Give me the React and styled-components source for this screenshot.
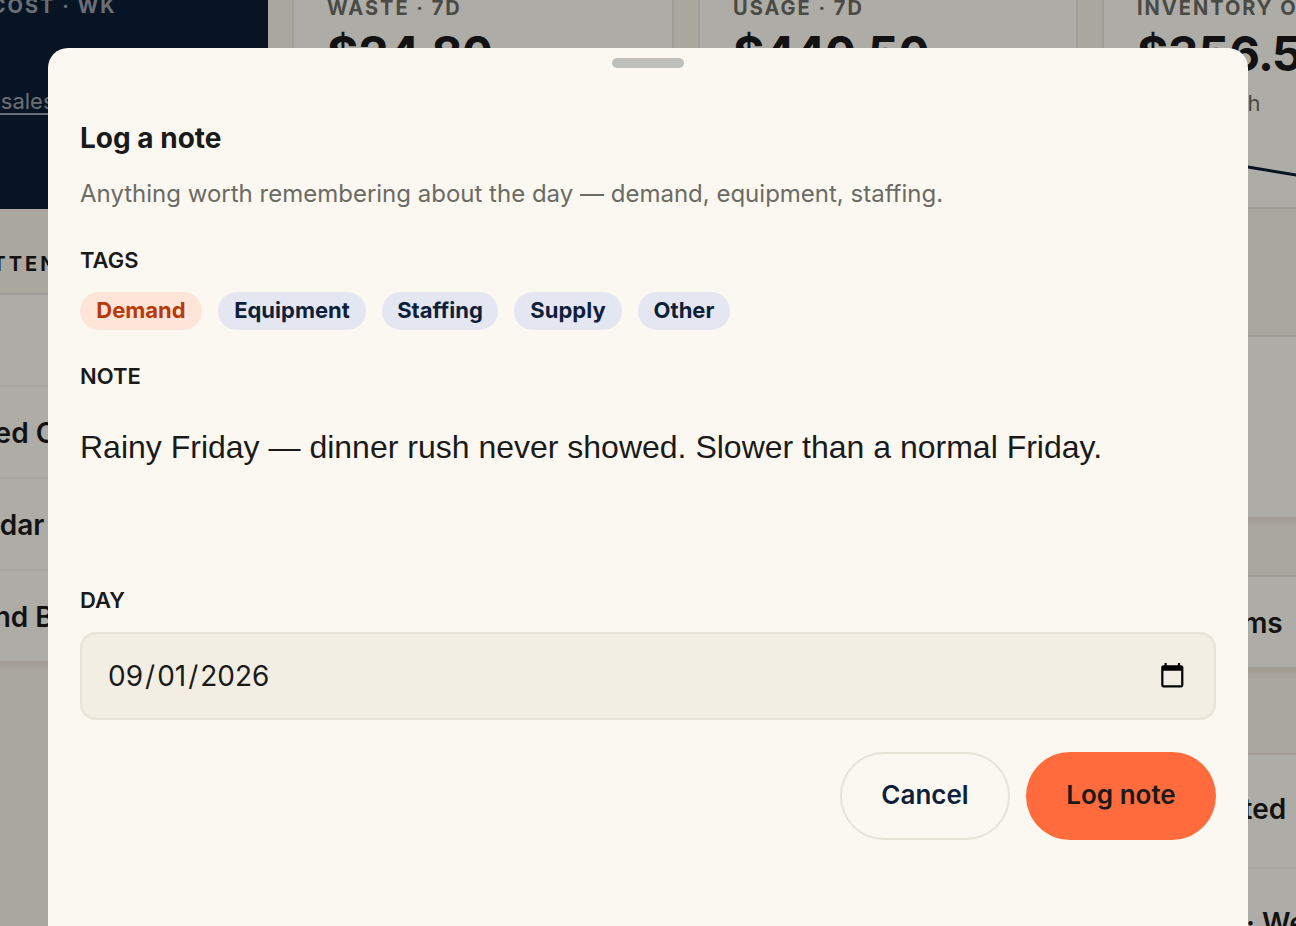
import { useState } from "react"
import styled, { createGlobalStyle, css } from "styled-components"

const tags = ["Demand", "Equipment", "Staffing", "Supply", "Other"]
const lowStock = ["", "Minced Chicken", "Cheddar", "Ground Beef"]
const activity = ["Get started", "Receipt · Wednesday"]

export default function App() {
    const [tag, setTag] = useState("Demand")
    const [note, setNote] = useState("Rainy Friday — dinner rush never showed. Slower than a normal Friday.")

    return (
        <Page>
            <GlobalStyle />
            <Dashboard>
                <Stats>
                    <StatCard $dark>
                        <StatLabel>FOOD COST · WK</StatLabel>
                        <StatValue />
                        <StatLink>30% of sales</StatLink>
                    </StatCard>
                    <StatCard>
                        <StatLabel>WASTE · 7D</StatLabel>
                        <StatValue>$24.80</StatValue>
                    </StatCard>
                    <StatCard>
                        <StatLabel>USAGE · 7D</StatLabel>
                        <StatValue>$440.50</StatValue>
                    </StatCard>
                    <StatCard>
                        <StatLabel>INVENTORY ON HAND</StatLabel>
                        <StatValue>$356.50</StatValue>
                        <StatHint>as of March</StatHint>
                        <Trend viewBox="0 0 312 40">
                            <path d="M0 4 L94 16 L208 35" />
                        </Trend>
                    </StatCard>
                </Stats>
                <Columns>
                    <div>
                        <SectionTitle>NEEDS ATTENTION</SectionTitle>
                        <List>
                            {lowStock.map((name, index) => (
                                <ListRow key={index}>{name}</ListRow>
                            ))}
                        </List>
                    </div>
                    <SideColumn>
                        <List>
                            <EmptyRow />
                        </List>
                        <List>
                            <ListRow $side>Prep items</ListRow>
                        </List>
                        <Feed>
                            {activity.map((item) => (
                                <FeedRow key={item}>{item}</FeedRow>
                            ))}
                        </Feed>
                    </SideColumn>
                </Columns>
            </Dashboard>
            <Overlay>
                <Sheet role="dialog">
                    <Handle />
                    <Title>Log a note</Title>
                    <Subtitle>Anything worth remembering about the day — demand, equipment, staffing.</Subtitle>
                    <Label>TAGS</Label>
                    <Chips>
                        {tags.map((name) => (
                            <Chip key={name} $active={name === tag} onClick={() => setTag(name)}>{name}</Chip>
                        ))}
                    </Chips>
                    <Label>NOTE</Label>
                    <NoteInput value={note} onChange={(e) => setNote(e.target.value)} spellCheck={false} />
                    <Label>DAY</Label>
                    <DateField>
                        <DateText>
                            <span>09</span>/<span>01</span>/<span>2026</span>
                        </DateText>
                        <CalendarIcon viewBox="0 0 24 24">
                            <path d="M20 3h-1V1h-2v2H7V1H5v2H4c-1.1 0-2 .9-2 2v16c0 1.1.9 2 2 2h16c1.1 0 2-.9 2-2V5c0-1.1-.9-2-2-2zm0 18H4V8h16v13z" />
                        </CalendarIcon>
                    </DateField>
                    <Actions>
                        <Button>Cancel</Button>
                        <Button $primary>Log note</Button>
                    </Actions>
                </Sheet>
            </Overlay>
        </Page>
    )
}

const GlobalStyle = createGlobalStyle`
    * {
        box-sizing: border-box;
    }

    body {
        margin: 0;
        overflow: hidden;
        font-family: Inter, sans-serif;
        font-variation-settings: 'opsz' 14;
        color: #1a1a1a;
    }
`

const Page = styled.div`
    width: 1296px;
    height: 926px;
    overflow: hidden;
    background-color: #f4efe4;
`

const Dashboard = styled.main`
    width: 1598px;
    margin-left: -114px;
    margin-top: -38px;
`

const Stats = styled.div`
    display: grid;
    grid-template-columns: 382px 382px 380px 382px;
    grid-template-rows: 247px;
    gap: 24px;
`

const StatCard = styled.div`
    display: flex;
    flex-direction: column;
    align-items: flex-start;
    padding: 32px 32px 0;
    background-color: #f9f7f0;
    border: 2px solid #e7e2d6;

    ${({ $dark }) => $dark && css`
        background-color: #0b1d34;
        border: none;
    `}
`

const StatLabel = styled.div`
    padding-left: 1px;
    font-size: 20px;
    line-height: 24px;
    font-weight: 700;
    letter-spacing: 2px;
    white-space: nowrap;
    color: #6b6b63;

    ${StatCard}:first-child & {
        color: #9aa0a8;
    }
`

const StatValue = styled.div`
    height: 56px;
    margin-top: 6px;
    padding-left: 1px;
    font-size: 48px;
    line-height: 56px;
    font-weight: 700;
    font-variant-numeric: tabular-nums;
    letter-spacing: -0.48px;
`

const StatHint = styled.div`
    margin-top: 8px;
    padding-left: 1px;
    font-size: 22px;
    line-height: 26px;
    color: #6b6b63;
`

const StatLink = styled(StatHint)`
    margin-top: 10px;
    padding-left: 0;
    line-height: 23px;
    color: #9aa0a8;
    border-bottom: 2px solid #9aa0a8;
`

const Trend = styled.svg`
    width: 312px;
    height: 40px;
    margin-top: 32px;
    fill: none;
    stroke: #0b1d34;
    stroke-width: 3px;
`

const Columns = styled.div`
    display: grid;
    grid-template-columns: 1190px 382px;
    gap: 26px;
`

const SectionTitle = styled.h2`
    margin: 43px 0 0;
    height: 43px;
    font-size: 20px;
    line-height: 24px;
    font-weight: 700;
    letter-spacing: 3.05px;
`

const List = styled.div`
    background-color: #f9f7f0;
    box-shadow: 0 -2px 0 rgba(40, 20, 10, 0.06), 0 4px 8px rgba(40, 20, 10, 0.09);
`

const ListRow = styled.div`
    display: flex;
    align-items: center;
    height: 92px;
    padding-top: 2px;
    padding-left: ${({ $side }) => ($side ? "37px" : "42px")};
    border-bottom: 2px solid #f0ede5;
    font-size: 28px;
    font-weight: 600;
    white-space: nowrap;

    &:last-child {
        height: 90px;
        border-bottom: none;
    }
`

const EmptyRow = styled.div`
    height: 180px;
`

const SideColumn = styled.div`
    display: flex;
    flex-direction: column;
    gap: 60px;
    padding-top: 128px;
`

const Feed = styled(List)`
    margin-top: 28px;
`

const FeedRow = styled.div`
    height: 114px;
    padding: 36px 33px 0;
    border-bottom: 2px solid #f0ede5;
    font-size: 28px;
    line-height: 36px;
    font-weight: 600;
    white-space: nowrap;

    & + & {
        padding-left: 35px;
    }
`

const Overlay = styled.div`
    position: fixed;
    inset: 0;
    display: flex;
    padding: 48px 48px 0;
    background-color: rgba(0, 0, 0, 0.3);
`

const Sheet = styled.section`
    display: flex;
    flex-direction: column;
    width: 1200px;
    padding: 10px 32px 0;
    border-radius: 20px 20px 0 0;
    background-color: #fbf8f1;
`

const Handle = styled.div`
    align-self: center;
    width: 72px;
    height: 10px;
    border-radius: 5px;
    background-color: #bfc0bb;
`

const Title = styled.h1`
    margin: 52px 0 0;
    font-size: 28px;
    line-height: 36px;
    font-weight: 700;
`

const Subtitle = styled.p`
    margin: 21px 0 33px;
    font-size: 24px;
    line-height: 34px;
    color: #6b6b63;
`

const Label = styled.div`
    font-size: 22px;
    line-height: 32px;
    font-weight: 600;
`

const Chips = styled.div`
    display: grid;
    grid-template-columns: 122px 148px 116px 108px 92px;
    gap: 16px;
    margin: 16px 0 30px;
`

const Chip = styled.button`
    height: 38px;
    padding: 0 0 2px;
    border: none;
    border-radius: 19px;
    font: inherit;
    font-size: 22px;
    font-weight: 700;
    background-color: ${({ $active }) => ($active ? "#ffe4d8" : "#e4e7f1")};
    color: ${({ $active }) => ($active ? "#b83a0b" : "#0f1f3a")};
`

const NoteInput = styled.textarea`
    height: 144px;
    margin: 16px 0 32px;
    padding: 15px 0;
    border: none;
    outline: none;
    resize: none;
    background: transparent;
    font-family: "Liberation Sans", sans-serif;
    font-size: 32px;
    line-height: 48px;
    color: #1a1a1a;
`

const DateField = styled.div`
    display: flex;
    align-items: center;
    justify-content: space-between;
    height: 88px;
    margin-top: 16px;
    padding: 0 28.4px 0 24px;
    border: 2px solid #e6e3d8;
    border-radius: 16px;
    background-color: #f2eee3;
`

const DateText = styled.div`
    font-size: 28px;

    & > span {
        padding: 0 2px;
    }
`

const CalendarIcon = styled.svg`
    width: 26.6px;
    height: 26.6px;
    margin-bottom: 2px;
    fill: #000;
`

const Actions = styled.div`
    display: flex;
    justify-content: flex-end;
    gap: 16px;
    margin-top: 32px;
`

const Button = styled.button`
    width: ${({ $primary }) => ($primary ? "190px" : "170px")};
    height: 88px;
    padding: 0 0 4px;
    border: ${({ $primary }) => ($primary ? "none" : "2px solid #e6e3d8")};
    border-radius: 44px;
    font: inherit;
    font-size: 26px;
    font-weight: 600;
    background-color: ${({ $primary }) => ($primary ? "#ff6b3d" : "transparent")};
    color: ${({ $primary }) => ($primary ? "#1a1a1a" : "#0f1f3a")};
`
